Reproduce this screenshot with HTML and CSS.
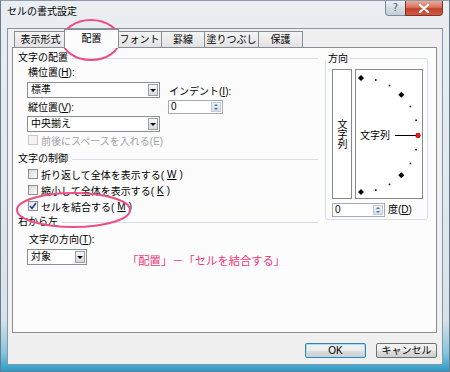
FILE: index.html
```html
<!DOCTYPE html>
<html lang="ja">
<head>
    <meta charset="UTF-8">
    <title>セルの書式設定</title>
    <link rel="stylesheet" href="styles.css">
</head>
<body>

<div class="window">
    <div class="titlebar">
        <span class="title">セルの書式設定</span>
        <div class="caption-buttons">
            <span class="cap-help">?</span>
            <span class="cap-close">
                <svg width="12" height="9" viewBox="0 0 12 9"><path d="M2 1 L10 8 M10 1 L2 8" stroke="#fff" stroke-width="2.2" stroke-linecap="round"/></svg>
            </span>
        </div>
    </div>

    <div class="client">
        <div class="tabs">
            <div class="tab w53">表示形式</div>
            <div class="tab active">配置</div>
            <div class="tab w45">フォント</div>
            <div class="tab w44">罫線</div>
            <div class="tab w55">塗りつぶし</div>
            <div class="tab w45">保護</div>
        </div>

        <div class="panel">
            <div class="left-col">
                <div class="section">文字の配置</div>
                <div class="align-row">
                    <div class="align-fields">
                        <div class="label">横位置(<u>H</u>):</div>
                        <div class="combo first"><span>標準</span><i class="drop"></i></div>
                        <div class="label second">縦位置(<u>V</u>):</div>
                        <div class="combo"><span>中央揃え</span><i class="drop"></i></div>
                    </div>
                    <div class="indent">
                        <div class="label">インデント(<u>I</u>):</div>
                        <div class="spin"><span>0</span><i class="spin-btns"></i></div>
                    </div>
                </div>
                <div class="check disabled"><span class="box"></span>前後にスペースを入れる(E)</div>

                <div class="section ctrl-title">文字の制御</div>
                <div class="check tall"><span class="box"></span>折り返して全体を表示する(<u>W</u>)</div>
                <div class="check tall"><span class="box"></span>縮小して全体を表示する(<u>K</u>)</div>
                <div class="check tall"><span class="box checked">
                    <svg width="8" height="8" viewBox="0 0 8 8"><path d="M1 4 L3 6.5 L7 1" fill="none" stroke="#1c3f94" stroke-width="1.6"/></svg>
                </span>セルを結合する(<u>M</u>)</div>

                <div class="section rtl-title">右から左</div>
                <div class="label dir-label">文字の方向(<u>T</u>):</div>
                <div class="dir-row">
                    <div class="combo short"><span>対象</span><i class="drop"></i></div>
                    <span class="note">「配置」－「セルを結合する」</span>
                </div>
            </div>

            <div class="right-col">
                <div class="group">
                    <div class="group-title">方向</div>
                    <div class="orient">
                        <div class="vtext"><span>文字列</span></div>
                        <svg class="dial" width="66" height="128" viewBox="0 0 66 128">
                            <g fill="#000">
                                <path d="M5 5 L8 8 L5 11 L2 8 Z"/>
                                <path d="M45.3 21.7 L48.3 24.7 L45.3 27.7 L42.3 24.7 Z"/>
                                <path d="M45.3 102.3 L48.3 105.3 L45.3 108.3 L42.3 105.3 Z"/>
                                <path d="M5 119 L8 122 L5 125 L2 122 Z"/>
                                <rect x="19" y="9.2" width="1.6" height="1.6"/>
                                <rect x="32.7" y="14.8" width="1.6" height="1.6"/>
                                <rect x="53.6" y="35.7" width="1.6" height="1.6"/>
                                <rect x="59.3" y="49.5" width="1.6" height="1.6"/>
                                <rect x="59.3" y="78.9" width="1.6" height="1.6"/>
                                <rect x="53.6" y="92.7" width="1.6" height="1.6"/>
                                <rect x="32.7" y="113.6" width="1.6" height="1.6"/>
                                <rect x="19" y="119.3" width="1.6" height="1.6"/>
                            </g>
                            <text x="4" y="69">文字列</text>
                            <line x1="39" y1="65.5" x2="60" y2="65.5" stroke="#000" stroke-width="1"/>
                            <circle cx="62" cy="65.5" r="2.4" fill="#e8141b" stroke="#7a0000" stroke-width="0.5"/>
                        </svg>
                    </div>
                    <div class="degree">
                        <div class="spin small"><span>0</span><i class="spin-btns"></i></div>
                        <span>度(<u>D</u>)</span>
                    </div>
                </div>
            </div>
        </div>

        <div class="footer">
            <button class="btn default">OK</button>
            <button class="btn">キャンセル</button>
        </div>
    </div>

    <!-- pink annotation marks over the dialog -->
    <svg class="marks" width="450" height="372" viewBox="0 0 450 372">
        <ellipse cx="91" cy="40" rx="28.5" ry="20" fill="none" stroke="#ec4f86" stroke-width="2"/>
        <ellipse cx="73.5" cy="210" rx="56.5" ry="17" fill="none" stroke="#ec4f86" stroke-width="2"/>
    </svg>
</div>

</body>
</html>
```

FILE: styles.css
```css
body {
    margin: 0;
    font-family: "Liberation Sans", "Noto Sans CJK JP", sans-serif;
    font-size: 10px;
    color: #000;
    text-autospace: no-autospace;
}

u {
    text-decoration: underline;
    text-underline-offset: 1px;
}

.window {
    position: relative;
    width: 450px;
    height: 372px;
    box-sizing: border-box;
    display: flex;
    flex-direction: column;
    border: 1px solid #6a7b8b;
    border-top-color: #8e9cab;
    background: linear-gradient(to bottom, #eaeef2 0%, #e1e7ec 55%, #d8e1e8 86%, #86c6dd 95%, #2a9dca 100%);
}

/* title bar */
.titlebar {
    height: 27px;
    display: flex;
    justify-content: space-between;
    align-items: flex-start;
}

.title {
    margin: 4px 0 0 6px;
    line-height: 14px;
    font-size: 10px;
}

.caption-buttons {
    display: flex;
    margin-right: 6px;
}

.cap-help {
    width: 20px;
    height: 15px;
    box-sizing: border-box;
    border: 1px solid #7d8a97;
    border-top: none;
    border-right: none;
    border-radius: 0 0 0 4px;
    background: linear-gradient(#eef1f4, #d3dbe3 50%, #c6d0da);
    color: #4c5866;
    text-align: center;
    line-height: 13px;
    font-family: "DejaVu Sans", sans-serif;
    font-size: 10px;
}

.cap-close {
    width: 38px;
    height: 15px;
    box-sizing: border-box;
    border: 1px solid #7b3429;
    border-top: none;
    border-radius: 0 0 4px 0;
    background: linear-gradient(#e9ab9d, #d8735f 45%, #c3412b 55%, #cf5a3f);
    display: flex;
    align-items: center;
    justify-content: center;
}

/* client area */
.client {
    flex: 1;
    margin: 0 6px 6px;
    border: 1px solid #8497a8;
    background: #f0f0f0;
    display: flex;
    flex-direction: column;
}

.tabs {
    display: flex;
    align-items: flex-end;
    height: 18px;
    padding-left: 6px;
    position: relative;
    z-index: 1;
}

.tab {
    flex: none;
    height: 16px;
    box-sizing: border-box;
    border: 1px solid #898c95;
    border-bottom: none;
    margin-right: -1px;
    background: linear-gradient(#f4f4f4, #e2e2e2);
    line-height: 15px;
    text-align: center;
}

.w53 { width: 53px; }
.w45 { width: 45px; }
.w44 { width: 44px; }
.w55 { width: 55px; }

.tab.active {
    width: 55px;
    height: 19px;
    margin: 0 -2px -1px -2px;
    background: #fcfcfc;
    line-height: 17px;
    position: relative;
    z-index: 2;
}

.panel {
    height: 286px;
    box-sizing: border-box;
    margin: 0 5px 0 4px;
    border: 1px solid #898c95;
    background: #fcfcfc;
    display: grid;
    grid-template-columns: 300px 103px;
    column-gap: 7px;
    padding: 3px 8px 0 5px;
    align-items: start;
}

/* left column */
.section {
    display: flex;
    align-items: center;
    line-height: 14px;
}

.section::after {
    content: "";
    flex: 1;
    margin: 1px 0 0 4px;
    border-top: 1px solid #d5dfe5;
}

.ctrl-title { margin-top: 5px; }
.rtl-title { margin-top: 1px; }

.label {
    line-height: 14px;
    padding-left: 1px;
}

.align-row {
    display: flex;
    margin-top: 1px;
    padding-left: 9px;
}

.align-fields {
    width: 133px;
}

.label.second { margin-top: 3px; }

.combo {
    display: flex;
    height: 16px;
    box-sizing: border-box;
    border: 1px solid #8b8e93;
    background: #fff;
    margin-top: 1px;
}

.combo.first { margin-top: 2px; }

.combo span {
    flex: 1;
    padding-left: 3px;
    line-height: 14px;
}

.drop {
    width: 10px;
    margin: 1px;
    box-sizing: border-box;
    border: 1px solid #9a9ea4;
    background: linear-gradient(#f6f6f6, #d9d9d9);
    display: flex;
    align-items: center;
    justify-content: center;
}

.drop::before {
    content: "";
    border-left: 3px solid transparent;
    border-right: 3px solid transparent;
    border-top: 3px solid #000;
}

.indent {
    margin: 19px 0 0 8px;
}

.spin {
    display: flex;
    width: 55px;
    height: 14px;
    box-sizing: border-box;
    border: 1px solid #a5acb5;
    background: #fff;
    margin-top: 1px;
}

.spin span {
    flex: 1;
    padding-left: 2px;
    line-height: 12px;
}

.spin-btns {
    width: 10px;
    margin: 1px;
    background: linear-gradient(#eef2f6, #d5dde6);
    border: 1px solid #c3ccd6;
    box-sizing: border-box;
    display: flex;
    flex-direction: column;
    align-items: center;
    justify-content: space-evenly;
}

.spin-btns::before,
.spin-btns::after {
    content: "";
    border-left: 2px solid transparent;
    border-right: 2px solid transparent;
}

.spin-btns::before { border-bottom: 2px solid #4d6f9c; }
.spin-btns::after { border-top: 2px solid #4d6f9c; }

.check {
    display: flex;
    align-items: center;
    gap: 3px;
    height: 14px;
    padding-left: 10px;
    margin-top: 1px;
}

.check.tall {
    height: 16px;
    margin-top: 0;
}

.box {
    width: 10px;
    height: 10px;
    box-sizing: border-box;
    border: 1px solid #8f8f8f;
    background: linear-gradient(135deg, #d8d8d8, #fbfbfb);
    display: flex;
    align-items: center;
    justify-content: center;
}

.box.checked {
    background: linear-gradient(135deg, #e6e6e6, #fff);
}

.check.disabled {
    color: #a3a3a3;
}

.check.disabled .box {
    border-color: #c8c8c8;
    background: #f4f4f4;
}

.dir-label {
    margin: 4px 0 0 10px;
}

.dir-row {
    display: flex;
    align-items: flex-end;
    margin-top: 2px;
    padding-left: 9px;
}

.combo.short {
    width: 60px;
    margin-top: 0;
}

.note {
    margin-left: 40px;
    color: #f0387a;
    font-family: "Noto Sans CJK JP", sans-serif;
    font-size: 11.3px;
    line-height: 14px;
    margin-bottom: -2px;
}

/* orientation group */
.group {
    margin-top: 7px;
    height: 162px;
    box-sizing: border-box;
    border: 1px solid #d5dfe5;
    border-radius: 3px;
    padding-left: 6px;
}

.group-title {
    width: fit-content;
    margin: -7px 0 0 -6px;
    padding: 0 2px;
    background: #fcfcfc;
    line-height: 14px;
}

.orient {
    display: flex;
    gap: 3px;
    margin-top: 3px;
}

.vtext {
    width: 20px;
    height: 130px;
    box-sizing: border-box;
    border: 1px solid #888;
    background: #fff;
    display: flex;
    align-items: center;
    justify-content: center;
}

.vtext span {
    writing-mode: vertical-rl;
    text-orientation: upright;
    line-height: 10px;
    font-family: "Noto Sans CJK JP", sans-serif;
}

.dial {
    display: block;
    border: 1px solid #888;
    background: #fff;
}

.dial text {
    font-family: "Noto Sans CJK JP", sans-serif;
    font-size: 10px;
}

.degree {
    display: flex;
    align-items: center;
    gap: 3px;
    margin-top: 4px;
    line-height: 14px;
}

.spin.small {
    width: 53px;
    margin-top: 0;
}

/* buttons */
.footer {
    display: flex;
    justify-content: flex-end;
    gap: 10px;
    padding: 10px 5px 0 0;
}

.btn {
    width: 61px;
    height: 15px;
    padding: 0;
    box-sizing: border-box;
    border: 1px solid #707070;
    border-radius: 2px;
    background: linear-gradient(#f3f3f3, #ebebeb 50%, #dddddd 51%, #cfcfcf);
    font-family: "Liberation Sans", "Noto Sans CJK JP", sans-serif;
    font-size: 10px;
    line-height: 13px;
    color: #000;
}

.btn.default {
    border-color: #3c7fb1;
    box-shadow: inset 0 0 0 1px #a6e0f5;
}

.marks {
    position: absolute;
    left: -1px;
    top: -1px;
    pointer-events: none;
}
```
